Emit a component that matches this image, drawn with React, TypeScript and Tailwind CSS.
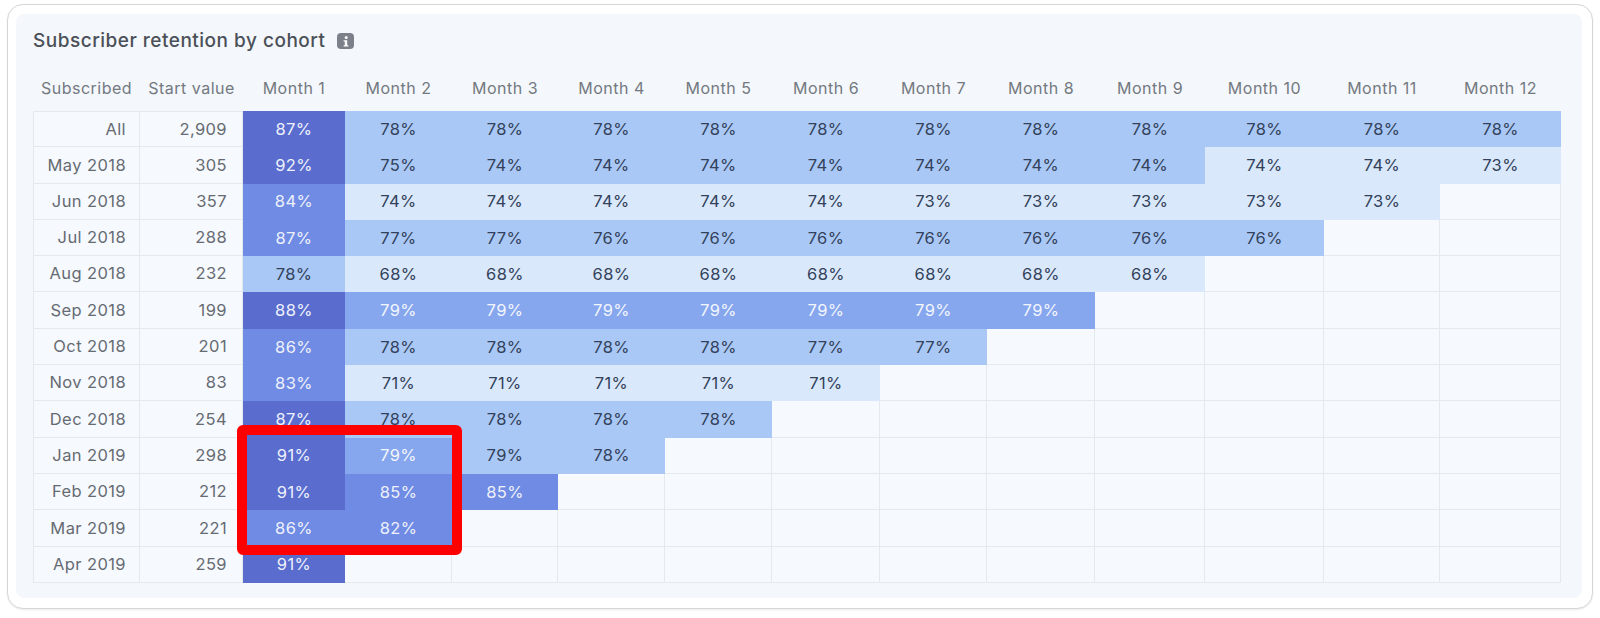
import React from 'react';

type Level = 'dark' | 'mid' | 'soft' | 'light' | 'pale' | 'none';

interface CohortRow {
  label: string;
  start: string;
  cells: [string, Level][];
}

const rows: CohortRow[] = [
  { label: 'All', start: '2,909', cells: [['87%', 'dark'], ...Array(11).fill(['78%', 'light'])] as [string, Level][] },
  {
    label: 'May 2018', start: '305',
    cells: [['92%', 'dark'], ['75%', 'light'], ['74%', 'light'], ['74%', 'light'], ['74%', 'light'], ['74%', 'light'], ['74%', 'light'], ['74%', 'light'], ['74%', 'light'], ['74%', 'pale'], ['74%', 'pale'], ['73%', 'pale']],
  },
  {
    label: 'Jun 2018', start: '357',
    cells: [['84%', 'mid'], ['74%', 'pale'], ['74%', 'pale'], ['74%', 'pale'], ['74%', 'pale'], ['74%', 'pale'], ['73%', 'pale'], ['73%', 'pale'], ['73%', 'pale'], ['73%', 'pale'], ['73%', 'pale']],
  },
  {
    label: 'Jul 2018', start: '288',
    cells: [['87%', 'mid'], ['77%', 'light'], ['77%', 'light'], ['76%', 'light'], ['76%', 'light'], ['76%', 'light'], ['76%', 'light'], ['76%', 'light'], ['76%', 'light'], ['76%', 'light']],
  },
  {
    label: 'Aug 2018', start: '232',
    cells: [['78%', 'light'], ...Array(8).fill(['68%', 'pale'])] as [string, Level][],
  },
  {
    label: 'Sep 2018', start: '199',
    cells: [['88%', 'dark'], ...Array(7).fill(['79%', 'soft'])] as [string, Level][],
  },
  {
    label: 'Oct 2018', start: '201',
    cells: [['86%', 'mid'], ['78%', 'light'], ['78%', 'light'], ['78%', 'light'], ['78%', 'light'], ['77%', 'light'], ['77%', 'light']],
  },
  {
    label: 'Nov 2018', start: '83',
    cells: [['83%', 'mid'], ...Array(5).fill(['71%', 'pale'])] as [string, Level][],
  },
  {
    label: 'Dec 2018', start: '254',
    cells: [['87%', 'dark'], ...Array(4).fill(['78%', 'light'])] as [string, Level][],
  },
  { label: 'Jan 2019', start: '298', cells: [['91%', 'dark'], ['79%', 'soft'], ['79%', 'light'], ['78%', 'light']] },
  { label: 'Feb 2019', start: '212', cells: [['91%', 'dark'], ['85%', 'mid'], ['85%', 'mid']] },
  { label: 'Mar 2019', start: '221', cells: [['86%', 'mid'], ['82%', 'mid']] },
  { label: 'Apr 2019', start: '259', cells: [['91%', 'dark']] },
];

const months = Array.from({ length: 12 }, (_, i) => `Month ${i + 1}`);

const levelClass: Record<Level, string> = {
  dark: 'bg-[#5a6dcf] text-[#eef1fb]',
  mid: 'bg-[#6f8be3] text-[#eef1fb]',
  soft: 'bg-[#86a6ee] text-[#f3f6fd]',
  light: 'bg-[#a9c8f6] text-[#33415a]',
  pale: 'bg-[#d9e8fb] text-[#33415a]',
  none: 'bg-[#f6f9fd] border-r border-b border-[#e4e9ef]',
};

const gridCols = 'grid grid-cols-[107px_103px_102px_107px_106px_107px_107px_108px_107px_108px_110px_119px_116px_121px]';

const App: React.FC = () => {
  return (
    <div className="w-[1600px] h-[618px] bg-white pl-[7px] pt-[4px] font-['Inter',sans-serif]">
      <div className="w-[1586px] h-[605px] rounded-[16px] border border-[#d4d6da] bg-white shadow-[0_1px_2px_rgba(0,0,0,0.08)] pl-[8px] pt-[9px]">
        <div className="w-[1566px] h-[584px] rounded-[8px] bg-[#f4f7fb] pl-[17px] pt-[15px]">
          {/* Title */}
          <div className="flex items-center gap-[12px] h-[24px]">
            <h2 className="text-[19px] font-medium text-[#4b5058] tracking-[0.5px]">Subscriber retention by cohort</h2>
            <span className="w-[17px] h-[16px] rounded-[4px] bg-[#7c8189] flex items-center justify-center">
              <svg width="6" height="11" viewBox="0 0 6 11" fill="white">
                <circle cx="3.2" cy="1.6" r="1.5" />
                <path d="M0.6 4.2h3.6v5h1.2v1.4H0.6V9.2h1.2V5.6H0.6z" />
              </svg>
            </span>
          </div>

          {/* Header */}
          <div className={`${gridCols} mt-[23px] h-[24px] text-[16px] tracking-[0.5px] text-[#737981] leading-[24px]`}>
            <div className="text-center">Subscribed</div>
            <div className="text-center">Start value</div>
            {months.map(m => (
              <div key={m} className="text-center">{m}</div>
            ))}
          </div>

          {/* Table */}
          <div className={`relative ${gridCols} mt-[11px] text-[16.5px] tracking-[0.4px]`}>
            {rows.map((row, ri) => {
              const top = ri === 0 ? 'border-t' : '';
              return (
                <React.Fragment key={row.label}>
                  <div className={`h-[36.3px] flex items-center justify-end pr-[13px] bg-[#f6f9fd] text-[#666b73] border-l border-r border-b border-[#e4e9ef] ${top}`}>
                    {row.label}
                  </div>
                  <div className={`h-[36.3px] flex items-center justify-end pr-[15px] bg-[#f6f9fd] text-[#666b73] border-r border-b border-[#e4e9ef] ${top}`}>
                    {row.start}
                  </div>
                  {months.map((m, ci) => {
                    const cell = row.cells[ci];
                    const level: Level = cell ? cell[1] : 'none';
                    return (
                      <div key={m} className={`h-[36.3px] flex items-center justify-center ${levelClass[level]} ${level === 'none' ? top : ''}`}>
                        {cell ? cell[0] : ''}
                      </div>
                    );
                  })}
                </React.Fragment>
              );
            })}

            {/* highlight annotation */}
            <div className="absolute left-[204px] top-[314px] w-[225px] h-[130px] border-[10px] border-[#ff0000] rounded-[6px] pointer-events-none" />
          </div>
        </div>
      </div>
    </div>
  );
};

export default App;
